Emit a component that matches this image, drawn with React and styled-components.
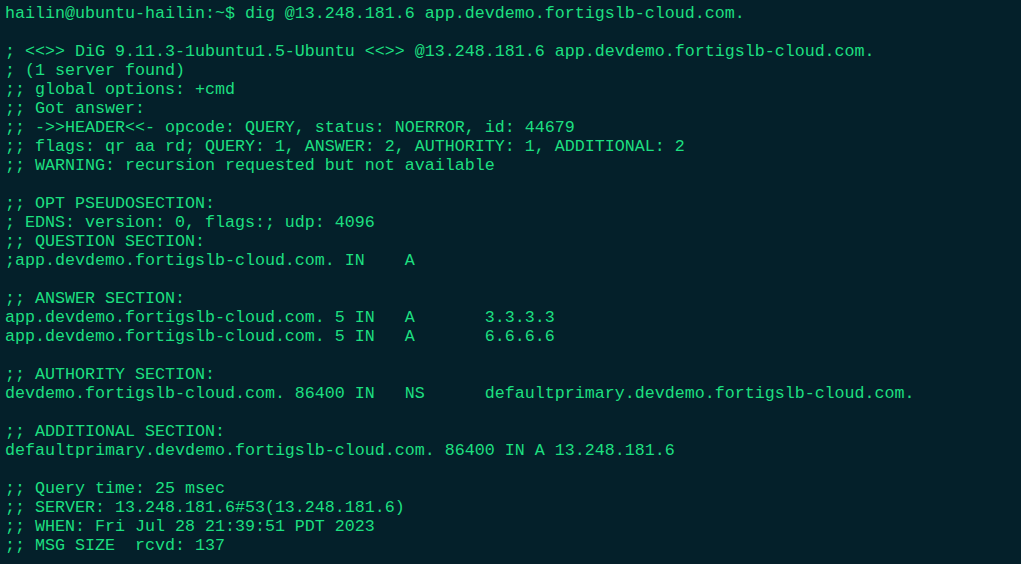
import React from 'react';
import styled, { createGlobalStyle } from 'styled-components';

const GlobalStyle = createGlobalStyle`
  html, body {
    margin: 0;
    padding: 0;
    background: #04202a;
  }
`;

const Terminal = styled.div`
  width: 1021px;
  height: 564px;
  box-sizing: border-box;
  padding: 4px 0 0 5px;
  background: #04202a;
  color: #1ddf80;
  font-family: "Liberation Mono", "Courier New", monospace;
  font-size: 16.67px;
  line-height: 19px;
  overflow: hidden;
`;

const Line = styled.div`
  height: 19px;
  white-space: pre;
`;

const output = [
  'hailin@ubuntu-hailin:~$ dig @13.248.181.6 app.devdemo.fortigslb-cloud.com.',
  '',
  '; <<>> DiG 9.11.3-1ubuntu1.5-Ubuntu <<>> @13.248.181.6 app.devdemo.fortigslb-cloud.com.',
  '; (1 server found)',
  ';; global options: +cmd',
  ';; Got answer:',
  ';; ->>HEADER<<- opcode: QUERY, status: NOERROR, id: 44679',
  ';; flags: qr aa rd; QUERY: 1, ANSWER: 2, AUTHORITY: 1, ADDITIONAL: 2',
  ';; WARNING: recursion requested but not available',
  '',
  ';; OPT PSEUDOSECTION:',
  '; EDNS: version: 0, flags:; udp: 4096',
  ';; QUESTION SECTION:',
  ';app.devdemo.fortigslb-cloud.com. IN    A',
  '',
  ';; ANSWER SECTION:',
  'app.devdemo.fortigslb-cloud.com. 5 IN   A       3.3.3.3',
  'app.devdemo.fortigslb-cloud.com. 5 IN   A       6.6.6.6',
  '',
  ';; AUTHORITY SECTION:',
  'devdemo.fortigslb-cloud.com. 86400 IN   NS      defaultprimary.devdemo.fortigslb-cloud.com.',
  '',
  ';; ADDITIONAL SECTION:',
  'defaultprimary.devdemo.fortigslb-cloud.com. 86400 IN A 13.248.181.6',
  '',
  ';; Query time: 25 msec',
  ';; SERVER: 13.248.181.6#53(13.248.181.6)',
  ';; WHEN: Fri Jul 28 21:39:51 PDT 2023',
  ';; MSG SIZE  rcvd: 137',
];

export default function App() {
  return (
    <>
      <GlobalStyle />
      <Terminal>
        {output.map((text, i) => (
          <Line key={i}>{text}</Line>
        ))}
      </Terminal>
    </>
  );
}
